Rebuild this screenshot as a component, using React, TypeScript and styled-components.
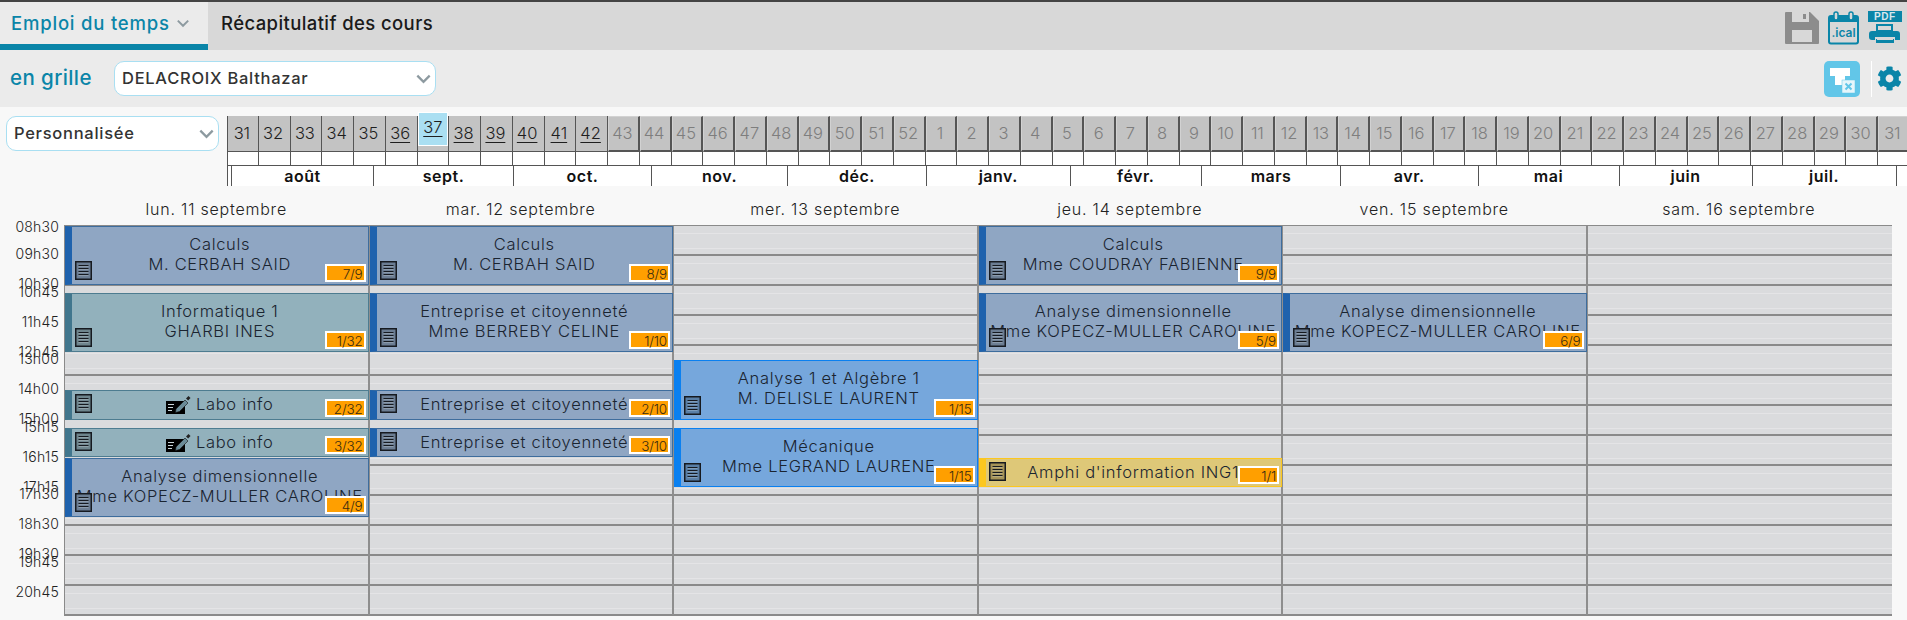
import React from "react";
import styled, { createGlobalStyle } from "styled-components";
import { FaCog } from "react-icons/fa";

const Global = createGlobalStyle`
  html, body { margin: 0; padding: 0; background: #f8f8f8; overflow: hidden; }
  body { font-family: Inter, "Liberation Sans", sans-serif; color: #333; }
`;

const Page = styled.div`
  width: 1907px;
  height: 620px;
  overflow: hidden;
  background: #f8f8f8;
`;

const TopLine = styled.div`
  height: 2px;
  background: #444;
`;
const TabBar = styled.div`
  height: 48px;
  background: #d8d8d8;
  display: flex;
  align-items: stretch;
`;
const Tab = styled.div<{ $active?: boolean }>`
  width: ${(p) => (p.$active ? "208px" : "auto")};
  box-sizing: border-box;
  padding: 0 0 ${(p) => (p.$active ? "0" : "6px")} ${(p) => (p.$active ? "11px" : "13px")};
  display: flex;
  align-items: center;
  gap: 5px;
  background: ${(p) => (p.$active ? "#ebebeb" : "transparent")};
  border-bottom: ${(p) => (p.$active ? "6px solid #0a85a8" : "none")};
  color: ${(p) => (p.$active ? "#0a85a8" : "#1a1a1a")};
  font-size: 18.5px;
  font-weight: 500;
  letter-spacing: ${(p) => (p.$active ? "0.8px" : "0.4px")};
`;
const TabSpacer = styled.div`
  flex: 1;
`;
const TopIcons = styled.div`
  display: flex;
  align-items: flex-start;
  gap: 9px;
  padding: 9px 5px 0 0;
`;
const SubBar = styled.div`
  height: 57px;
  background: #ebebeb;
  display: flex;
  align-items: center;
  padding: 0 5px 0 10px;
`;
const Title = styled.div`
  width: 104px;
  padding-bottom: 2px;
  color: #0a85a8;
  font-size: 20.5px;
  font-weight: 500;
  letter-spacing: 0.4px;
`;
const Select = styled.div<{ $w: number }>`
  flex: none;
  width: ${(p) => p.$w}px;
  height: 35px;
  box-sizing: border-box;
  background: #fff;
  border: 1px solid #a9dff2;
  border-radius: 10px;
  display: flex;
  align-items: center;
  justify-content: space-between;
  padding: 0 2px 1px 7px;
  font-size: 16.5px;
  font-weight: 500;
  letter-spacing: 0.72px;
  color: #333;
`;
const FilterBtn = styled.div`
  width: 36px;
  height: 36px;
  margin-left: auto;
  background: #62c6e8;
  border-radius: 5px;
`;
const Divider = styled.div`
  width: 1px;
  height: 36px;
  background: #fff;
  margin: 0 5px 0 11px;
`;
const GearWrap = styled.div`
  color: #0a85a8;
  font-size: 25px;
  display: flex;
`;

const Chooser = styled.div`
  display: flex;
  align-items: flex-start;
  padding: 9px 0 0 6px;
  height: 79px;
  box-sizing: border-box;
`;
const Weeks = styled.div`
  margin: -4px 0 0 8px;
  padding-top: 4px;
  width: 1680px;
  overflow: hidden;
  flex: none;
`;
const WeekRow = styled.div`
  display: grid;
  grid-template-columns: repeat(53, 31.75px);
  width: 1683px;
  height: 36px;
`;
type WeekState = "plain" | "link" | "off" | "sel";
const WeekCell = styled.div<{ $state: WeekState }>`
  box-sizing: border-box;
  display: flex;
  align-items: center;
  justify-content: center;
  font-size: 16.5px;
  font-weight: 300;
  position: relative;
  background: #c3c3c3;
  color: ${(p) => (p.$state === "off" ? "#7e7e7e" : "#1e1e1e")};
  text-decoration: ${(p) => (p.$state === "link" ? "underline" : "none")};
  text-underline-offset: 3px;
  padding: 0 2px ${(p) => (p.$state === "off" ? "2px" : "2px")} 0;
  ${(p) =>
    p.$state === "off"
      ? "border-top: 1px solid #d2d2d2; border-left: 1px solid #d2d2d2; border-right: 2px solid #555; border-bottom: 2px solid #555;"
      : "border-right: 1px solid #555; border-bottom: 1px solid #555;"}
  &:first-child { border-left: 1px solid #555; }
`;
const SelWeek = styled.div`
  box-sizing: border-box;
  position: absolute;
  left: 0;
  right: 0;
  top: -4px;
  height: 34px;
  background: #aadff2;
  border: 1px solid #fff;
  display: flex;
  align-items: center;
  justify-content: center;
  color: #1e1e1e;
  text-decoration: underline;
  text-underline-offset: 3px;
  padding-bottom: 5px;
`;
const TickRow = styled.div`
  display: grid;
  grid-template-columns: repeat(53, 31.75px);
  height: 13px;
  background: #fff;
  width: 1683px;
`;
const Tick = styled.div`
  border-right: 1px solid #555;
  box-sizing: border-box;
  &:first-child { border-left: 1px solid #555; }
`;
const MonthRow = styled.div`
  display: flex;
  height: 21px;
  background: #fff;
  border-top: 1px solid #555;
  box-sizing: border-box;
  width: 1680px;
`;
const Month = styled.div<{ $w: number }>`
  flex: none;
  width: ${(p) => p.$w}px;
  box-sizing: border-box;
  border-right: 1px solid #555;
  text-align: center;
  font-size: 16px;
  font-weight: 600;
  letter-spacing: 0.5px;
  line-height: 20px;
  color: #111;
  &:first-child { border-left: 1px solid #555; }
  &:last-child { border-right: 0; }
`;

const DayHeads = styled.div`
  display: grid;
  grid-template-columns: repeat(6, 304.5px);
  margin-left: 64px;
  height: 39px;
`;
const DayHead = styled.div`
  text-align: center;
  font-size: 16px;
  font-weight: 300;
  line-height: 46px;
  letter-spacing: 0.78px;
  color: #222;
`;
const Body = styled.div`
  display: flex;
  height: 391px;
`;
const Times = styled.div`
  width: 64px;
  flex: none;
  position: relative;
`;
const TimeLabel = styled.div<{ $y: number }>`
  position: absolute;
  right: 5px;
  top: ${(p) => p.$y}px;
  line-height: 16px;
  font-size: 14px;
  font-weight: 300;
  letter-spacing: 0.2px;
  color: #222;
`;
const Grid = styled.div`
  display: grid;
  grid-template-columns: repeat(6, 304.5px);
  width: 1828px;
  height: 391px;
  border: 1px solid #8a8a8a;
  box-sizing: border-box;
`;
const Column = styled.div<{ $last?: boolean }>`
  position: relative;
  box-sizing: border-box;
  border-right: ${(p) => (p.$last ? "0" : "2px solid #8e8e8e")};
  background: repeating-linear-gradient(
    to bottom,
    #dadbdd 0 7px,
    #e4e4e6 7px 8px,
    #dadbdd 8px 22px,
    #e4e4e6 22px 23px,
    #dadbdd 23px 28px,
    #8a8a8a 28px 30px
  );
`;

type Tone = "navy" | "teal" | "blue" | "gold";
const tones: Record<Tone, { bg: string; bar: string; line: string; ic: string }> = {
  navy: { bg: "#8fa6c3", bar: "#1f62ad", line: "#3e6d9d", ic: "#6b7d93" },
  teal: { bg: "#92b1bc", bar: "#41768d", line: "#4d7c90", ic: "#6e858d" },
  blue: { bg: "#76a7dc", bar: "#0a80f0", line: "#0a80f0", ic: "#587ea6" },
  gold: { bg: "#dec878", bar: "#fcc71f", line: "#fcc71f", ic: "#a59357" },
};

const Event = styled.div<{ $tone: Tone; $top: number; $h: number }>`
  position: absolute;
  box-sizing: border-box;
  left: 0;
  right: -1px;
  top: ${(p) => p.$top}px;
  height: ${(p) => p.$h}px;
  background: ${(p) => tones[p.$tone].bg};
  border: 1px solid ${(p) => tones[p.$tone].line};
  border-left: 7px solid ${(p) => tones[p.$tone].bar};
  z-index: 1;
`;
const Lines = styled.div<{ $small?: boolean }>`
  text-align: center;
  font-size: 16.5px;
  font-weight: 300;
  line-height: 20px;
  letter-spacing: 0.7px;
  color: #1a2430;
  white-space: nowrap;
  padding-top: ${(p) => (p.$small ? "3px" : "7px")};
`;
const SmallLine = styled.div`
  display: flex;
  justify-content: center;
  align-items: center;
  gap: 5px;
`;
const DocSlot = styled.div<{ $small?: boolean }>`
  position: absolute;
  left: 3px;
  ${(p) => (p.$small ? "top: 3px;" : "bottom: 4px;")}
  display: flex;
`;
const Badge = styled.div`
  position: absolute;
  right: 2px;
  bottom: 2px;
  width: 41px;
  height: 18px;
  box-sizing: border-box;
  background: #ff9f00;
  border: 2px solid #fff;
  font-size: 13.5px;
  font-weight: 300;
  line-height: 16px;
  letter-spacing: -0.2px;
  text-align: right;
  padding-right: 1px;
  color: #3a2c10;
`;

const Chevron = ({ c = "#8d9aa0", s = 19 }: { c?: string; s?: number }) => (
  <svg width={s} height={s} viewBox="0 0 20 20" fill="none">
    <path d="M3.5 7 L10 13.5 L16.5 7" stroke={c} strokeWidth="2.4" />
  </svg>
);

const DocIcon = ({ fill }: { fill: string }) => (
  <svg width="17" height="19" viewBox="0 0 17 19">
    <rect x="0.75" y="0.75" width="15.5" height="17.5" fill={fill} stroke="#161a20" strokeWidth="1.5" />
    <g stroke="#161a20" strokeWidth="1.1">
      <path d="M3.5 4.5H13.5M3.5 7.5H13.5M3.5 10.5H13.5M3.5 13.5H13.5" />
    </g>
    <g stroke="#e8eef2" strokeWidth="0.6" opacity="0.5">
      <path d="M3.5 5.6H13.5M3.5 8.6H13.5M3.5 11.6H13.5M3.5 14.6H13.5" />
    </g>
  </svg>
);

const LaboIcon = () => (
  <svg width="25" height="19" viewBox="0 0 25 19">
    <rect x="0" y="6" width="19" height="13" fill="#000" />
    <path d="M2 9.5h6M2 12.5h5M2 15.5h4" stroke="#c8d4d8" strokeWidth="1.2" />
    <path d="M10 14 L19 5 L22 8 L13.5 16.5 L9.5 17.5 Z" fill="#6a8b97" stroke="#111" strokeWidth="0.6" />
    <path d="M20 3.5 L22.5 1 L24.5 3 L22.2 5.6 Z" fill="#222" />
  </svg>
);

const SaveIcon = () => (
  <svg width="34" height="34" viewBox="0 0 34 34">
    <path d="M0 2a1 1 0 0 1 1-1h24l9 9v22a1 1 0 0 1-1 1H1a1 1 0 0 1-1-1Z" fill="#8c8c8c" />
    <rect x="7" y="1" width="17" height="10" fill="#d8d8d8" />
    <rect x="18" y="3" width="3" height="5" fill="#8c8c8c" />
    <rect x="7" y="19" width="20" height="12" fill="#d8d8d8" />
  </svg>
);
const IcalText = styled.text`
  font-family: Inter, sans-serif;
  font-size: 12px;
  font-weight: 600;
  fill: #0a85a8;
`;
const PdfText = styled.text`
  font-family: "Liberation Sans", sans-serif;
  font-size: 10px;
  font-weight: 700;
  fill: #d8e8ee;
  letter-spacing: 0.6px;
`;
const IcalIcon = () => (
  <svg width="31" height="34" viewBox="0 0 31 34">
    <rect x="1" y="5" width="29" height="27.5" rx="2" fill="#d8d8d8" stroke="#0a85a8" strokeWidth="2" />
    <rect x="1" y="5" width="29" height="6" fill="#0a85a8" />
    <rect x="6" y="1" width="4" height="8" rx="2" fill="#d8d8d8" stroke="#0a85a8" strokeWidth="1.5" />
    <rect x="21" y="1" width="4" height="8" rx="2" fill="#d8d8d8" stroke="#0a85a8" strokeWidth="1.5" />
    <IcalText x="3.5" y="26">.ical</IcalText>
  </svg>
);
const PdfIcon = () => (
  <svg width="34" height="34" viewBox="0 0 34 34">
    <rect x="0" y="0" width="34" height="11" fill="#0a85a8" />
    <PdfText x="6" y="9">PDF</PdfText>
    <path d="M9 14h15v6H9Z" fill="none" stroke="#0a85a8" strokeWidth="2" />
    <path d="M4 20h25a3 3 0 0 1 3 3v6h-5v-3H7v3H4a3 3 0 0 1-3-3v-3a3 3 0 0 1 3-3Z" fill="#0a85a8" />
    <path d="M8 28h18v4H8Z" fill="#0a85a8" />
    <path d="M9 27.5h16v1.5H9Z" fill="#d8d8d8" />
  </svg>
);
const FilterIcon = () => (
  <svg width="36" height="36" viewBox="0 0 36 36">
    <path d="M6 7h20v8h-5v9h-10v-9H6Z" fill="#fff" />
    <rect x="18" y="19" width="13" height="13" fill="#e6f6fb" stroke="#62c6e8" strokeWidth="0.5" />
    <path d="M21.5 22.5l6 6M27.5 22.5l-6 6" stroke="#62c6e8" strokeWidth="2" />
  </svg>
);

const weeks: string[] = [];
for (let i = 31; i <= 52; i++) weeks.push(String(i));
for (let i = 1; i <= 31; i++) weeks.push(String(i));

const months: [string, number][] = [
  ["", 5], ["août", 142], ["sept.", 140], ["oct.", 138], ["nov.", 136], ["déc.", 139],
  ["janv.", 143.5], ["févr.", 131.5], ["mars", 139], ["avr.", 137.5], ["mai", 141], ["juin", 133], ["juil.", 144], ["", 11],
];

const days = ["lun. 11 septembre", "mar. 12 septembre", "mer. 13 septembre", "jeu. 14 septembre", "ven. 15 septembre", "sam. 16 septembre"];

const times: [string, number][] = [
  ["08h30", 219], ["09h30", 246], ["10h30", 276], ["10h45", 284], ["11h45", 314], ["12h45", 344], ["13h00", 351],
  ["14h00", 381], ["15h00", 411], ["15h15", 419], ["16h15", 449], ["17h15", 479], ["17h30", 486], ["18h30", 516],
  ["19h30", 546], ["19h45", 554], ["20h45", 584],
];

type Ev = { top: number; h: number; tone: Tone; a: string; b?: string; badge: string; labo?: boolean };
const KOP = "Mme KOPECZ-MULLER CAROLINE";
const columns: Ev[][] = [
  [
    { top: 0, h: 59, tone: "navy", a: "Calculs", b: "M. CERBAH SAID", badge: "7/9" },
    { top: 67, h: 59, tone: "teal", a: "Informatique 1", b: "GHARBI INES", badge: "1/32" },
    { top: 164, h: 30, tone: "teal", a: "Labo info", badge: "2/32", labo: true },
    { top: 202, h: 29, tone: "teal", a: "Labo info", badge: "3/32", labo: true },
    { top: 232, h: 59, tone: "navy", a: "Analyse dimensionnelle", b: KOP, badge: "4/9" },
  ],
  [
    { top: 0, h: 59, tone: "navy", a: "Calculs", b: "M. CERBAH SAID", badge: "8/9" },
    { top: 67, h: 59, tone: "navy", a: "Entreprise et citoyenneté", b: "Mme BERREBY CELINE", badge: "1/10" },
    { top: 164, h: 30, tone: "navy", a: "Entreprise et citoyenneté", badge: "2/10" },
    { top: 202, h: 29, tone: "navy", a: "Entreprise et citoyenneté", badge: "3/10" },
  ],
  [
    { top: 134, h: 60, tone: "blue", a: "Analyse 1 et Algèbre 1", b: "M. DELISLE LAURENT", badge: "1/15" },
    { top: 202, h: 59, tone: "blue", a: "Mécanique", b: "Mme LEGRAND LAURENE", badge: "1/15" },
  ],
  [
    { top: 0, h: 59, tone: "navy", a: "Calculs", b: "Mme COUDRAY FABIENNE", badge: "9/9" },
    { top: 67, h: 59, tone: "navy", a: "Analyse dimensionnelle", b: KOP, badge: "5/9" },
    { top: 232, h: 29, tone: "gold", a: "Amphi d'information ING1", badge: "1/1" },
  ],
  [{ top: 67, h: 59, tone: "navy", a: "Analyse dimensionnelle", b: KOP, badge: "6/9" }],
  [],
];

const weekState = (i: number): WeekState => (i === 6 ? "sel" : i < 5 ? "plain" : i <= 11 ? "link" : "off");

export default function App() {
  return (
    <Page>
      <Global />
      <TopLine />
      <TabBar>
        <Tab $active>
          Emploi du temps
          <Chevron s={16} c="#8d9aa0" />
        </Tab>
        <Tab>Récapitulatif des cours</Tab>
        <TabSpacer />
        <TopIcons>
          <SaveIcon />
          <IcalIcon />
          <PdfIcon />
        </TopIcons>
      </TabBar>
      <SubBar>
        <Title>en grille</Title>
        <Select $w={322}>
          DELACROIX Balthazar
          <Chevron />
        </Select>
        <FilterBtn>
          <FilterIcon />
        </FilterBtn>
        <Divider />
        <GearWrap>
          <FaCog />
        </GearWrap>
      </SubBar>
      <Chooser>
        <Select $w={213}>
          Personnalisée
          <Chevron />
        </Select>
        <Weeks>
          <WeekRow>
            {weeks.map((w, i) => (
              <WeekCell key={i} $state={weekState(i)}>
                {i === 6 ? <SelWeek>{w}</SelWeek> : w}
              </WeekCell>
            ))}
          </WeekRow>
          <TickRow>
            {weeks.map((_, i) => (
              <Tick key={i} />
            ))}
          </TickRow>
          <MonthRow>
            {months.map(([m, w], i) => (
              <Month key={i} $w={w}>
                {m}
              </Month>
            ))}
          </MonthRow>
        </Weeks>
      </Chooser>
      <DayHeads>
        {days.map((d) => (
          <DayHead key={d}>{d}</DayHead>
        ))}
      </DayHeads>
      <Body>
        <Times>
          {times.map(([t, y]) => (
            <TimeLabel key={t} $y={y - 225}>
              {t}
            </TimeLabel>
          ))}
        </Times>
        <Grid>
          {columns.map((evs, c) => (
            <Column key={c} $last={c === 5}>
              {evs.map((e, i) => (
                <Event key={i} $tone={e.tone} $top={e.top} $h={e.h}>
                  {e.b ? (
                    <Lines>
                      <div>{e.a}</div>
                      <div>{e.b}</div>
                    </Lines>
                  ) : (
                    <Lines $small>
                      <SmallLine>
                        {e.labo && <LaboIcon />}
                        {e.a}
                      </SmallLine>
                    </Lines>
                  )}
                  <DocSlot $small={!e.b}>
                    <DocIcon fill={tones[e.tone].ic} />
                  </DocSlot>
                  <Badge>{e.badge}</Badge>
                </Event>
              ))}
            </Column>
          ))}
        </Grid>
      </Body>
    </Page>
  );
}
